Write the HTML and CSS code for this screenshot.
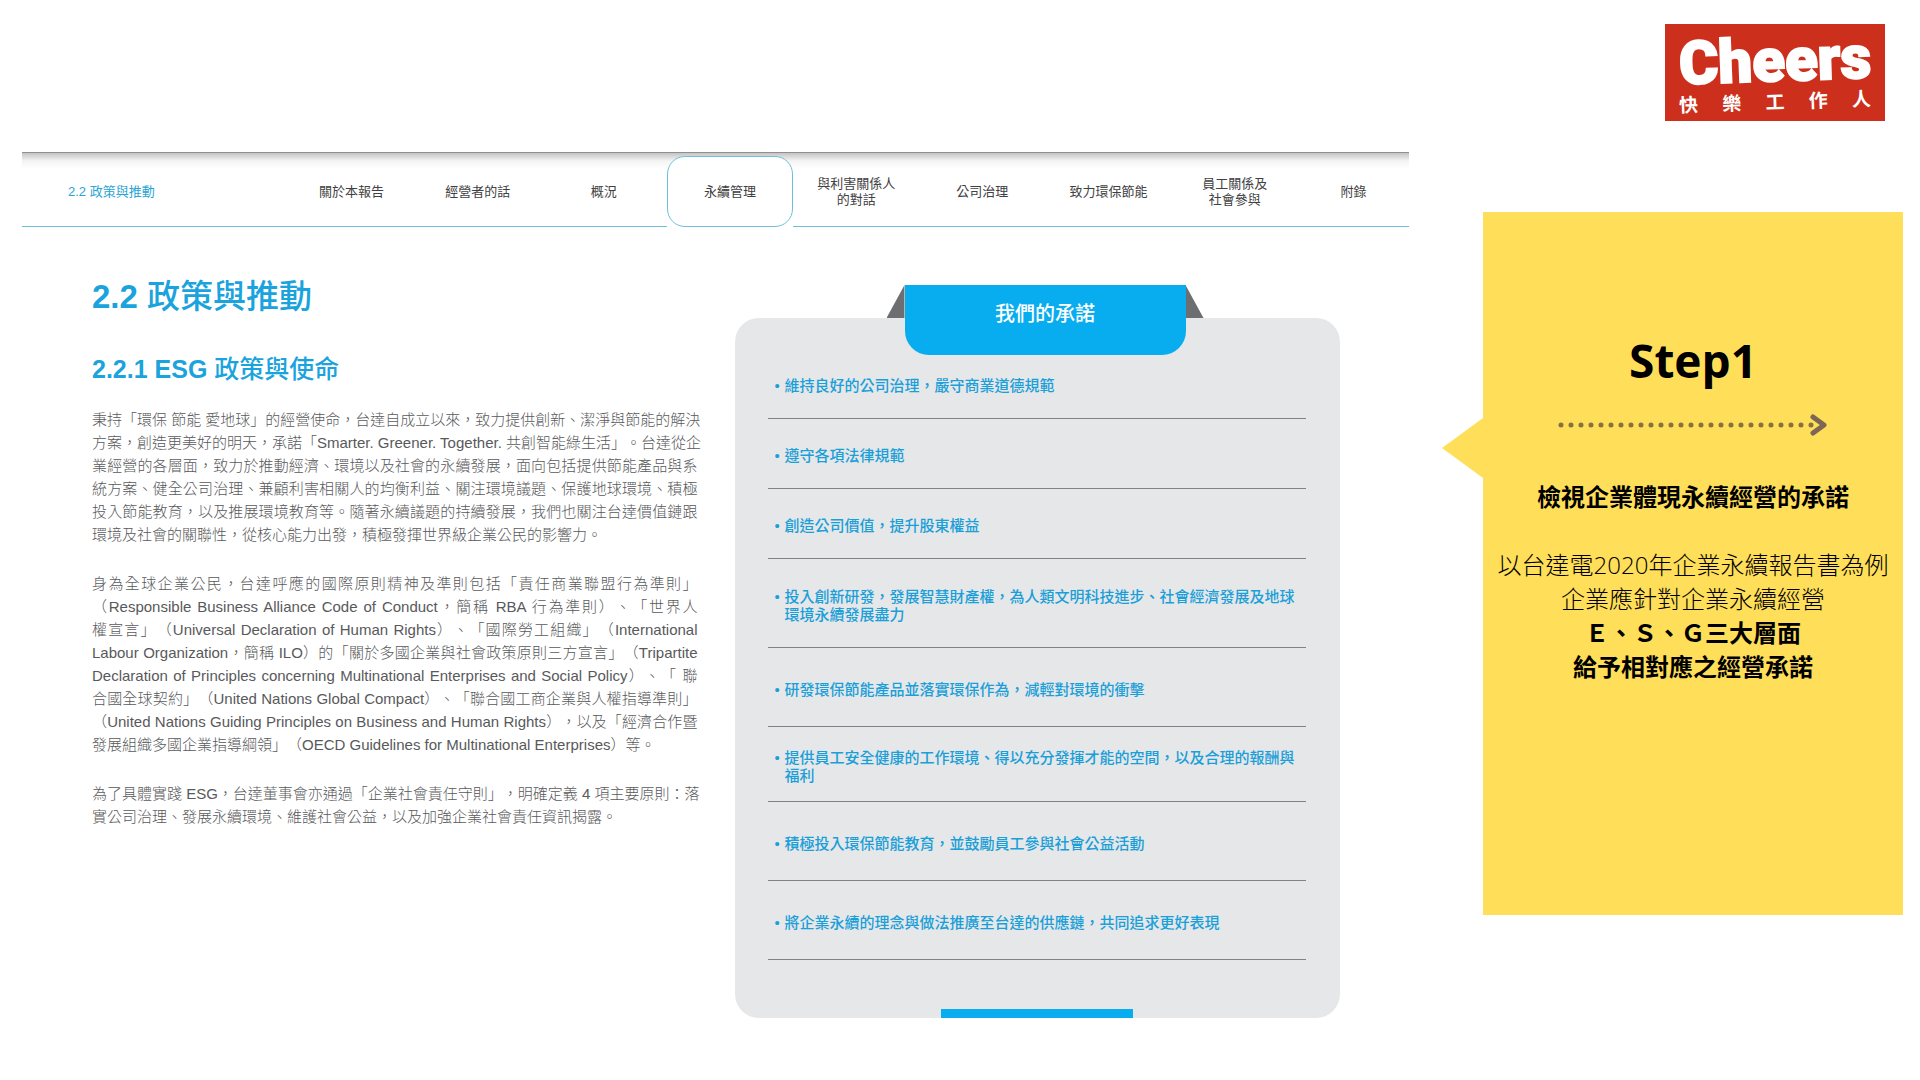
FILE: index.html
```html
<!DOCTYPE html>
<html lang="zh-Hant">
<head>
  <meta charset="UTF-8" />
  <meta name="viewport" content="width=device-width, initial-scale=1" />
  <title>2.2 政策與推動 - Cheers 快樂工作人</title>
  <link rel="stylesheet" href="styles.css">
</head>
<body>
  <header class="top">
    <a class="logo" href="#">
      <span class="logo-name">Cheers</span>
      <span class="logo-sub"><span>快</span><span>樂</span><span>工</span><span>作</span><span>人</span></span>
    </a>
  </header>

  <main class="page">
    <section class="report">
      <nav class="tabs">
        <a class="current" href="#policy">2.2 政策與推動</a>
        <a href="#">關於本報告</a>
        <a href="#">經營者的話</a>
        <a href="#">概況</a>
        <a class="active" href="#">永續管理</a>
        <a href="#">與利害關係人<br>的對話</a>
        <a href="#">公司治理</a>
        <a href="#">致力環保節能</a>
        <a href="#">員工關係及<br>社會參與</a>
        <a href="#">附錄</a>
      </nav>

      <div class="columns">
        <article class="text" id="policy">
          <h1><b>2.2</b> 政策與推動</h1>
          <h2><b>2.2.1 ESG</b> 政策與使命</h2>
          <p>
            <span>秉持「環保 節能 愛地球」的經營使命，台達自成立以來，致力提供創新、潔淨與節能的解決</span>
            <span>方案，創造更美好的明天，承諾「Smarter. Greener. Together. 共創智能綠生活」。台達從企</span>
            <span>業經營的各層面，致力於推動經濟、環境以及社會的永續發展，面向包括提供節能產品與系</span>
            <span>統方案、健全公司治理、兼顧利害相關人的均衡利益、關注環境議題、保護地球環境、積極</span>
            <span>投入節能教育，以及推展環境教育等。隨著永續議題的持續發展，我們也關注台達價值鏈跟</span>
            <span>環境及社會的關聯性，從核心能力出發，積極發揮世界級企業公民的影響力。</span>
          </p>
          <p>
            <span>身為全球企業公民，台達呼應的國際原則精神及準則包括「責任商業聯盟行為準則」</span>
            <span>（Responsible Business Alliance Code of Conduct，簡稱 RBA 行為準則）、「世界人</span>
            <span>權宣言」（Universal Declaration of Human Rights）、「國際勞工組織」（International</span>
            <span>Labour Organization，簡稱 ILO）的「關於多國企業與社會政策原則三方宣言」（Tripartite</span>
            <span>Declaration of Principles concerning Multinational Enterprises and Social Policy）、「 聯</span>
            <span>合國全球契約」（United Nations Global Compact）、「聯合國工商企業與人權指導準則」</span>
            <span>（United Nations Guiding Principles on Business and Human Rights），以及「經濟合作暨</span>
            <span>發展組織多國企業指導綱領」（OECD Guidelines for Multinational Enterprises）等。</span>
          </p>
          <p>
            <span>為了具體實踐 ESG，台達董事會亦通過「企業社會責任守則」，明確定義 4 項主要原則：落</span>
            <span>實公司治理、發展永續環境、維護社會公益，以及加強企業社會責任資訊揭露。</span>
          </p>
        </article>

        <section class="card">
          <h3 class="ribbon">我們的承諾</h3>
          <ul>
            <li><span>維持良好的公司治理，嚴守商業道德規範</span></li>
            <li><span>遵守各項法律規範</span></li>
            <li><span>創造公司價值，提升股東權益</span></li>
            <li><span>投入創新研發，發展智慧財產權，為人類文明科技進步、社會經濟發展及地球環境永續發展盡力</span></li>
            <li><span>研發環保節能產品並落實環保作為，減輕對環境的衝擊</span></li>
            <li><span>提供員工安全健康的工作環境、得以充分發揮才能的空間，以及合理的報酬與福利</span></li>
            <li><span>積極投入環保節能教育，並鼓勵員工參與社會公益活動</span></li>
            <li><span>將企業永續的理念與做法推廣至台達的供應鏈，共同追求更好表現</span></li>
          </ul>
          <div class="card-bar"></div>
        </section>
      </div>
    </section>

    <aside class="step">
      <h2>Step1</h2>
      <svg class="arrow" width="270" height="24" viewBox="0 0 270 24" aria-hidden="true">
        <path d="M3 12H256" stroke="#86713f" stroke-width="5" stroke-linecap="round" stroke-dasharray="0 10" fill="none" />
        <path d="M255 4L266 12L255 20" stroke="#7d6754" stroke-width="5" stroke-linecap="round" stroke-linejoin="round" fill="none" />
      </svg>
      <p><b>檢視企業體現永續經營的承諾</b></p>
      <p>
        以台達電2020年企業永續報告書為例<br>
        企業應針對企業永續經營<br>
        <b>Ｅ、Ｓ、Ｇ三大層面<br>
        給予相對應之經營承諾</b>
      </p>
    </aside>
  </main>
</body>
</html>
```

FILE: styles.css
```css
* {
  box-sizing: border-box;
}

body {
  margin: 0;
  background: #fff;
  font-family: "Liberation Sans", "Noto Sans CJK TC", sans-serif;
  text-spacing-trim: space-all;
}

h1, h2, h3, p, ul {
  margin: 0;
  padding: 0;
}

a {
  color: inherit;
  text-decoration: none;
}

b {
  font-weight: 700;
}

/* logo */
.top {
  display: flex;
  justify-content: flex-end;
  padding: 24px 35px 31px;
}

.logo {
  width: 220px;
  height: 97px;
  padding: 6px 14px;
  background: #cc301d;
  color: #fff;
}

.logo-name {
  display: block;
  font-family: Roboto, "Liberation Sans", sans-serif;
  font-size: 60px;
  font-weight: 900;
  line-height: 62px;
  text-align: center;
  -webkit-text-stroke: 2px #fff;
  transform: rotate(-2deg);
}

.logo-sub {
  display: flex;
  justify-content: space-between;
  font-size: 19px;
  font-weight: bold;
  line-height: 22px;
  transform: rotate(-2deg);
}

/* layout */
.page {
  display: flex;
  align-items: flex-start;
  padding: 0 17px 40px 22px;
}

.report {
  flex: 1;
  min-width: 0;
}

/* tabs */
.tabs {
  display: grid;
  grid-template-columns: 266fr repeat(8, 126fr) 111fr;
  height: 75px;
  border-top: 1px solid #8f8f8f;
  background: linear-gradient(#c4c4c4, #f4f4f4 8px, #fff 16px);
  color: #414042;
  font-size: 13px;
  line-height: 16px;
  text-align: center;
}

.tabs a {
  display: flex;
  align-items: center;
  justify-content: center;
  padding-top: 4px;
  border-bottom: 1px solid #6cc0dd;
}

.tabs .current {
  justify-content: flex-start;
  padding-left: 46px;
  color: #2aa5d5;
}

.tabs .active {
  margin-top: 3px;
  padding-top: 1px;
  border: 1px solid #6cc0dd;
  border-radius: 18px;
  background: #fff;
}

.columns {
  display: grid;
  grid-template-columns: repeat(2, minmax(0, 1fr));
  gap: 37px;
  padding: 0 69px 0 70px;
}

/* left text */
.text h1 {
  margin-top: 50px;
  color: #1aa3dd;
  font-size: 33px;
  font-weight: 500;
  line-height: 40px;
}

.text h2 {
  margin: 36px 0 23px;
  color: #1aa3dd;
  font-size: 25px;
  font-weight: 500;
  line-height: 32px;
}

.text p {
  margin-bottom: 26px;
  color: #58595b;
  font-size: 15px;
  font-weight: 300;
  line-height: 23px;
}

.text span {
  display: block;
  white-space: nowrap;
  text-align: justify;
  text-align-last: justify;
}

.text span:last-child {
  text-align-last: left;
}

/* commitments */
.card {
  position: relative;
  align-self: start;
  margin-top: 91px;
  padding: 31px 34px 0 33px;
  border-radius: 24px;
  background: #e6e7e8;
}

.ribbon {
  position: absolute;
  top: -33px;
  left: 170px;
  width: 281px;
  height: 70px;
  border-radius: 0 0 24px 24px;
  background: #08adef;
  color: #fff;
  font-size: 20px;
  font-weight: 500;
  line-height: 58px;
  text-align: center;
}

.ribbon::before,
.ribbon::after {
  content: "";
  position: absolute;
  top: 0;
  width: 18px;
  height: 33px;
  background: #6d6e71;
}

.ribbon::before {
  right: 100%;
  clip-path: polygon(100% 0, 100% 100%, 0 100%);
}

.ribbon::after {
  left: 100%;
  clip-path: polygon(0 0, 100% 100%, 0 100%);
}

.card ul {
  display: grid;
  grid-template-rows: 70px 70px 70px 89px 79px 75px 79px 79px;
  list-style: none;
}

.card li {
  display: flex;
  align-items: center;
  padding: 5px 4px 0 17px;
  border-bottom: 1px solid #808285;
  color: #1a9fd9;
  font-size: 15px;
  font-weight: 500;
  line-height: 18px;
}

.card li span {
  text-indent: -10px;
}

.card li span::before {
  content: "•";
  display: inline-block;
  width: 10px;
  text-indent: 0;
}

.card-bar {
  width: 192px;
  height: 9px;
  margin: 49px auto 0;
  background: #08adef;
}

/* yellow step box */
.step {
  position: relative;
  flex: 0 0 420px;
  margin: 60px 0 0 74px;
  padding: 116px 0 231px;
  background: #ffde59;
  color: #000;
  font-family: "Open Sans", "Noto Sans CJK TC", sans-serif;
  font-size: 24px;
  line-height: 34px;
  text-align: center;
}

.step::before {
  content: "";
  position: absolute;
  top: 206px;
  right: 100%;
  width: 41px;
  height: 60px;
  background: #ffde59;
  clip-path: polygon(0 50%, 100% 0, 100% 100%);
}

.step h2 {
  font-size: 46px;
  line-height: 64px;
}

.arrow {
  display: block;
  margin: 21px auto 43px;
}

.step p + p {
  margin-top: 34px;
  font-weight: 300;
}
```
